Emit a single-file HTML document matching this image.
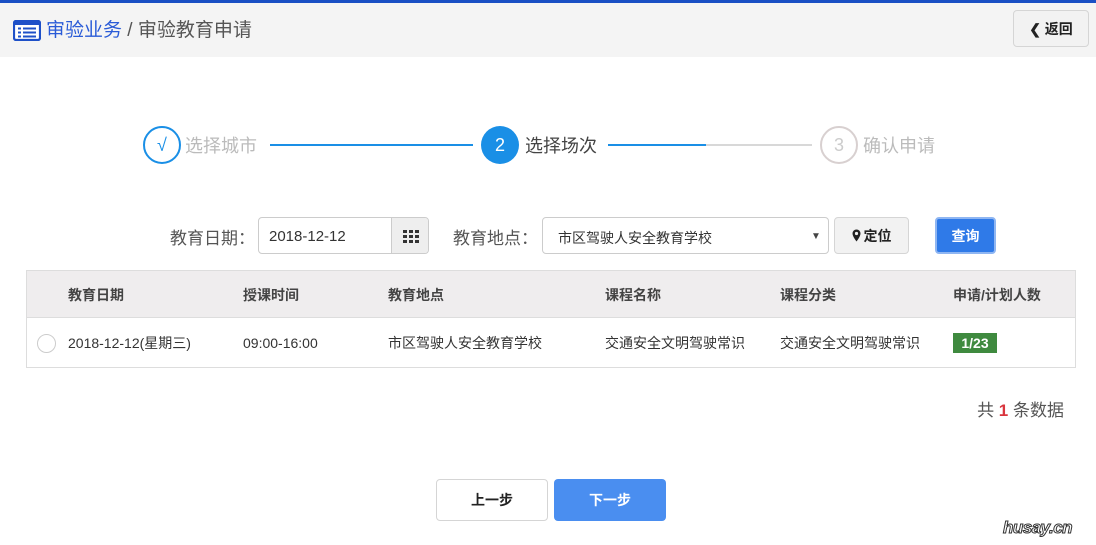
<!DOCTYPE html>
<html><head><meta charset="utf-8"><style>
*{margin:0;padding:0;box-sizing:border-box}
body{width:1096px;height:545px;background:#fff;position:relative;overflow:hidden;font-family:"Liberation Sans","Noto Sans CJK SC",sans-serif;color:#333}
.a{position:absolute}
.hdr{left:0;top:0;width:1096px;height:57px;background:#f4f4f4;border-top:3px solid #1a4fc4}
.btn{border:1px solid #d5d5d5;border-radius:4px;background:#f2f2f2;display:flex;align-items:center;justify-content:center;font-weight:bold;font-size:14px;color:#222}
.circ{width:38px;height:38px;border-radius:50%;display:flex;align-items:center;justify-content:center;font-size:18px}
.lbl{font-size:17px;color:#555}
</style></head><body>
<div class="a hdr"></div>
<svg class="a" style="left:13px;top:20px" width="28" height="21" viewBox="0 0 28 21"><rect x="1" y="1" width="26" height="19" rx="2" fill="#fff" stroke="#1e50c8" stroke-width="2.2"/><rect x="1" y="1" width="26" height="4" fill="#1e50c8"/><g fill="#1e50c8"><rect x="5" y="7.5" width="3" height="2"/><rect x="10" y="7.5" width="13" height="2"/><rect x="5" y="11.5" width="3" height="2"/><rect x="10" y="11.5" width="13" height="2"/><rect x="5" y="15.5" width="3" height="2"/><rect x="10" y="15.5" width="13" height="2"/></g></svg>
<div class="a" style="left:46px;top:18px;font-size:19px;line-height:26px;color:#555"><span style="color:#2a5bd7">审验业务</span> / 审验教育申请</div>
<div class="a btn" style="left:1013px;top:10px;width:76px;height:37px;font-size:14px">&#10094; 返回</div>

<div class="a circ" style="left:143px;top:126px;border:2px solid #1a8fe6;color:#1a8fe6">√</div>
<div class="a" style="left:185px;top:132px;font-size:18px;color:#bbb">选择城市</div>
<div class="a" style="left:270px;top:144px;width:203px;height:2px;background:#1a8fe6"></div>
<div class="a circ" style="left:481px;top:126px;background:#1a8fe6;color:#fff">2</div>
<div class="a" style="left:525px;top:132px;font-size:18px;color:#444">选择场次</div>
<div class="a" style="left:608px;top:144px;width:98px;height:2px;background:#1a8fe6"></div>
<div class="a" style="left:706px;top:144px;width:106px;height:2px;background:#d8d8d8"></div>
<div class="a circ" style="left:820px;top:126px;border:2px solid #d8d0d0;color:#ccc">3</div>
<div class="a" style="left:863px;top:132px;font-size:18px;color:#bbb">确认申请</div>

<div class="a lbl" style="left:170px;top:224px">教育日期：</div>
<div class="a" style="left:258px;top:217px;width:171px;height:37px;border:1px solid #ccc;border-radius:4px;overflow:hidden">
<div class="a" style="left:10px;top:10px;font-size:15px">2018-12-12</div>
<div class="a" style="left:132px;top:0;width:38px;height:37px;background:#eee;border-left:1px solid #ccc;display:flex;align-items:center;justify-content:center"><svg width="16" height="13"><g fill="#333"><rect x="0" y="0" width="4" height="3"/><rect x="6" y="0" width="4" height="3"/><rect x="12" y="0" width="4" height="3"/><rect x="0" y="5" width="4" height="3"/><rect x="6" y="5" width="4" height="3"/><rect x="12" y="5" width="4" height="3"/><rect x="0" y="10" width="4" height="3"/><rect x="6" y="10" width="4" height="3"/><rect x="12" y="10" width="4" height="3"/></g></svg></div></div>
<div class="a lbl" style="left:453px;top:224px">教育地点：</div>
<div class="a" style="left:542px;top:217px;width:287px;height:37px;border:1px solid #ccc;border-radius:4px">
<div class="a" style="left:15px;top:10px;font-size:14px">市区驾驶人安全教育学校</div>
<div class="a" style="left:268px;top:13px;font-size:10px;color:#444">▼</div></div>
<div class="a btn" style="left:834px;top:217px;width:75px;height:37px">
<svg width="9" height="13" viewBox="0 0 9 13" style="margin-right:3px"><path d="M4.5 0.5a4 4 0 0 0-4 4c0 3 4 8 4 8s4-5 4-8a4 4 0 0 0-4-4z" fill="#222"/><circle cx="4.5" cy="4.5" r="1.6" fill="#f2f2f2"/></svg>定位</div>
<div class="a" style="left:935px;top:217px;width:61px;height:37px;border-radius:4px;background:#2f7ae8;border:2px solid #8fb6f2;color:#fff;font-weight:bold;font-size:14px;display:flex;align-items:center;justify-content:center">查询</div>

<div class="a" style="left:26px;top:270px;width:1050px;height:98px;border:1px solid #ddd">
<div class="a" style="left:0;top:0;width:1048px;height:47px;background:#efedee;border-bottom:1px solid #ddd"></div>
</div>
<div class="a" style="left:68px;top:285px;font-size:14px;font-weight:bold;color:#444">教育日期</div>
<div class="a" style="left:243px;top:285px;font-size:14px;font-weight:bold;color:#444">授课时间</div>
<div class="a" style="left:388px;top:285px;font-size:14px;font-weight:bold;color:#444">教育地点</div>
<div class="a" style="left:605px;top:285px;font-size:14px;font-weight:bold;color:#444">课程名称</div>
<div class="a" style="left:780px;top:285px;font-size:14px;font-weight:bold;color:#444">课程分类</div>
<div class="a" style="left:953px;top:285px;font-size:14px;font-weight:bold;color:#444">申请/计划人数</div>
<div class="a" style="left:37px;top:334px;width:19px;height:19px;border:1px solid #ccc;border-radius:50%"></div>
<div class="a" style="left:68px;top:333px;font-size:14px">2018-12-12(星期三)</div>
<div class="a" style="left:243px;top:335px;font-size:14px">09:00-16:00</div>
<div class="a" style="left:388px;top:333px;font-size:14px">市区驾驶人安全教育学校</div>
<div class="a" style="left:605px;top:333px;font-size:14px">交通安全文明驾驶常识</div>
<div class="a" style="left:780px;top:333px;font-size:14px">交通安全文明驾驶常识</div>
<div class="a" style="left:953px;top:333px;width:44px;height:20px;background:#3f8a3f;color:#fff;font-weight:bold;font-size:14px;text-align:center;line-height:20px">1/23</div>

<div class="a" style="right:32px;top:396px;font-size:17px;color:#555">共 <b style="color:#d9363e">1</b> 条数据</div>

<div class="a btn" style="left:436px;top:479px;width:112px;height:42px;background:#fff">上一步</div>
<div class="a" style="left:554px;top:479px;width:112px;height:42px;border-radius:4px;background:#4a8ef0;color:#fff;font-weight:bold;font-size:14px;display:flex;align-items:center;justify-content:center">下一步</div>
<div class="a" style="left:1003px;top:518px;font-size:17px;font-weight:bold;font-style:italic;color:#fff;-webkit-text-stroke:1px #333;letter-spacing:-0.5px">husay.cn</div>
</body></html>
